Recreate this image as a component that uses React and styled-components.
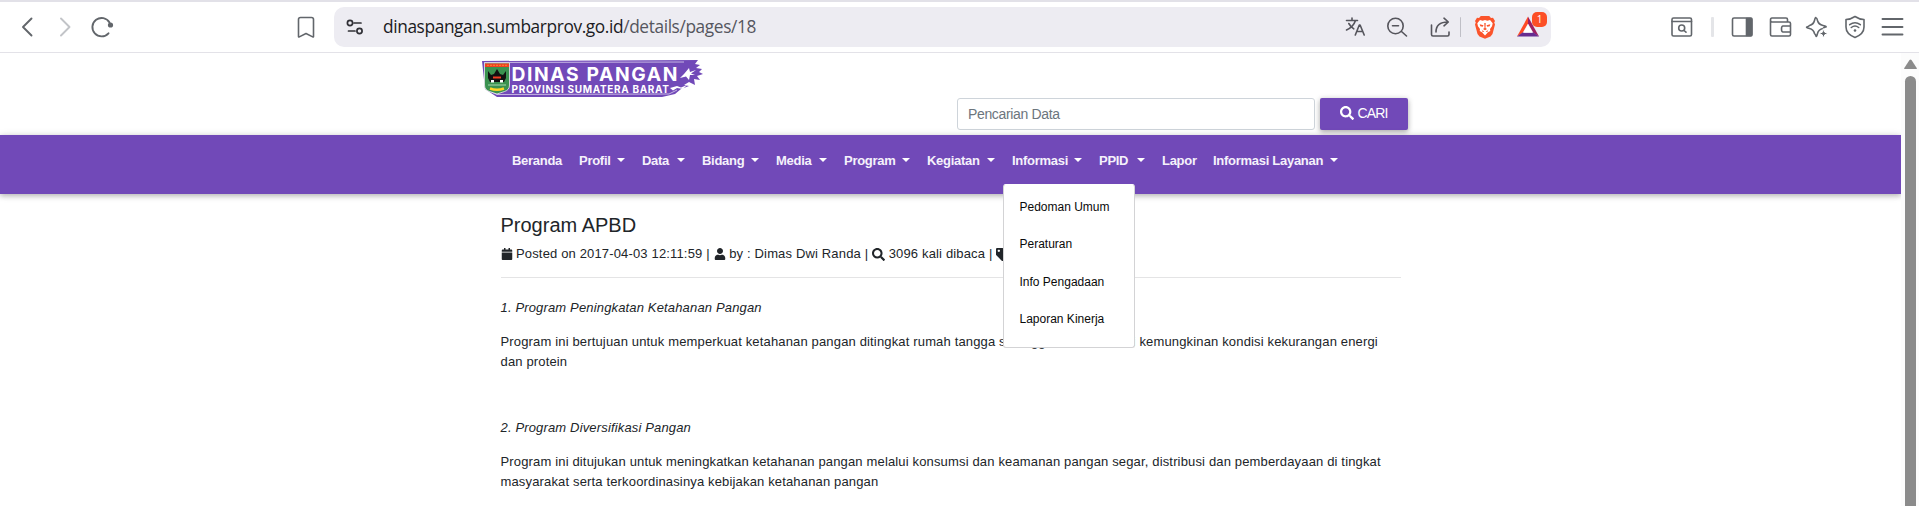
import React from "react";
import styled, { createGlobalStyle } from "styled-components";
import { FaSearch, FaCalendar, FaUser, FaTag } from "react-icons/fa";

const Global = createGlobalStyle`
  * { box-sizing: border-box; }
  html, body { margin: 0; background: #fff; overflow: hidden; }
  body { font-family: "Liberation Sans", Arial, sans-serif; color: #212529; }
`;

const Window = styled.div`
  display: flex;
  flex-direction: column;
  width: 1919px;
  height: 506px;
  overflow: hidden;
`;

const Toolbar = styled.header`
  display: flex;
  align-items: center;
  flex: none;
  height: 53px;
  padding: 0 11px 0 15px;
  border-top: 2px solid #e2e1e8;
  border-bottom: 1px solid #e3e2e8;
`;

const ToolIcon = styled.svg`
  flex: none;
  width: 24px;
  height: 24px;
  margin-left: ${(p) => p.$gap || 0}px;
  fill: none;
  stroke: ${(p) => p.$color || "#62666b"};
  stroke-width: ${(p) => p.$weight || 1.6};
  stroke-linecap: round;
  stroke-linejoin: round;
`;

const AddressBar = styled.div`
  display: flex;
  align-items: center;
  width: 1217px;
  height: 40px;
  margin-left: 16px;
  padding-left: 9px;
  border-radius: 10px;
  background: #edecf2;
`;

const Url = styled.div`
  flex: none;
  width: 966px;
  padding-left: 16px;
  font: 17.3px/24px "Open Sans", "Noto Sans", sans-serif;
  letter-spacing: -0.38px;
  color: #55565e;
  white-space: nowrap;
  b { font-weight: 400; color: #1b1b22; }
`;

const Divider = styled.span`
  width: ${(p) => p.$w}px;
  height: 20px;
  margin-left: ${(p) => p.$gap}px;
  border-radius: 1px;
  background: ${(p) => p.$color};
`;

const Rewards = styled.div`
  position: relative;
  display: flex;
  margin-left: 18px;
`;

const Badge = styled.span`
  position: absolute;
  left: 17px;
  top: -3px;
  width: 15px;
  height: 15px;
  border-radius: 5px;
  background: #fc4f26;
  color: #fff;
  font: 10px/15px "Open Sans", sans-serif;
  text-align: center;
`;

const Viewport = styled.div`
  display: flex;
  flex: 1;
  min-height: 0;
`;

const Page = styled.div`
  width: 1901px;
  overflow: hidden;
`;

const ScrollRail = styled.div`
  display: flex;
  flex-direction: column;
  align-items: center;
  width: 18px;
  padding: 6px 0 0 1px;
  background: #fcfcfc;
`;

const ScrollThumb = styled.div`
  flex: 1;
  width: 11px;
  margin-top: 6px;
  border-radius: 6px 6px 0 0;
  background: #8b8b8b;
`;

const Masthead = styled.div`
  display: flex;
  height: 82px;
  padding: 7px 0 0 482px;
`;

const Search = styled.form`
  display: flex;
  margin: 38px 0 0 253px;
`;

const SearchField = styled.input`
  width: 358px;
  height: 32px;
  padding: 0 10px;
  border: 1px solid #ced4da;
  border-radius: 3px;
  font: 14px "Liberation Sans", Arial, sans-serif;
  letter-spacing: -0.35px;
  &::placeholder { color: #6c757d; opacity: 1; }
`;

const SearchButton = styled.button`
  display: flex;
  align-items: center;
  justify-content: center;
  gap: 3px;
  width: 88px;
  height: 32px;
  margin-left: 5px;
  padding: 0 0 3px;
  border: 0;
  border-radius: 2px;
  background: #7149b8;
  box-shadow: 0 2px 5px rgba(0, 0, 0, 0.25), 0 1px 7px rgba(0, 0, 0, 0.12);
  color: #fff;
  font: 14px "Liberation Sans", Arial, sans-serif;
  letter-spacing: -0.8px;
`;

const NavBar = styled.nav`
  position: relative;
  display: flex;
  height: 59px;
  padding: 16px 0 0 512px;
  background: #7149b8;
  box-shadow: 0 2px 5px rgba(0, 0, 0, 0.2), 0 1px 8px rgba(0, 0, 0, 0.14);
`;

const NavItem = styled.div`
  position: relative;
  display: flex;
  flex: none;
  width: ${(p) => p.$w}px;
  font-size: 13px;
  font-weight: 700;
  line-height: 20px;
  letter-spacing: -0.28px;
  color: #f5f1fb;
  white-space: nowrap;
`;

const Caret = styled.span`
  margin: 7px 17px 0 auto;
  width: 8px;
  height: 4px;
  border: 4px solid transparent;
  border-top-color: #fff;
  border-bottom: 0;
`;

const Menu = styled.div`
  position: absolute;
  left: -9px;
  top: 33px;
  z-index: 2;
  width: 132px;
  height: 164px;
  padding: 4px 0 0 15.5px;
  border: 1px solid #d3d3d5;
  border-top-color: #fff;
  border-radius: 3px;
  background: #fff;
`;

const MenuLink = styled.div`
  height: 37.3px;
  font-size: 12px;
  font-weight: 400;
  line-height: 37.3px;
  letter-spacing: 0;
  color: #0a0a0a;
`;

const Article = styled.main`
  width: 900px;
  margin-left: 500.5px;
  padding-top: 19px;
  font-size: 13px;
  line-height: 20px;
  letter-spacing: 0.155px;
  white-space: nowrap;
`;

const Title = styled.h1`
  margin: 0;
  font-size: 20px;
  font-weight: 400;
  line-height: 24px;
  letter-spacing: 0;
`;

const Meta = styled.div`
  display: flex;
  align-items: center;
  height: 41px;
  margin-bottom: 20px;
  padding: 5px 0 11px;
  border-bottom: 1px solid #e4e4e5;
  span { margin: 0 4px 0 3.5px; }
`;

const Program = styled.section`
  height: 120px;
  p { margin: 0 0 14px; }
  em { display: block; margin-bottom: 14px; }
`;

const nav = [
  ["Beranda", 67, false],
  ["Profil", 63, true],
  ["Data", 60, true],
  ["Bidang", 74, true],
  ["Media", 68, true],
  ["Program", 83, true],
  ["Kegiatan", 85, true],
  ["Informasi", 87, true],
  ["PPID", 63, true],
  ["Lapor", 51, false],
  ["Informasi Layanan", 142, true],
];

const menu = ["Pedoman Umum", "Peraturan", "Info Pengadaan", "Laporan Kinerja"];

function BrowserToolbar() {
  return (
    <Toolbar>
      <ToolIcon viewBox="0 0 24 24" $weight={1.9}><path d="M16.500 3.500 8 12l8.500 8.500" /></ToolIcon>
      <ToolIcon viewBox="0 0 24 24" $gap={14} $color="#c2c4c8" $weight={1.9}><path d="M8 3.500 16.500 12 8 20.500" /></ToolIcon>
      <ToolIcon viewBox="0 0 24 24" $gap={13} $weight={1.9}>
        <path d="M18.500 18.300A9.200 9.200 0 1 1 19.500 7.500" />
        <circle cx="20.500" cy="10" r="2.600" fill="#62666b" stroke="none" />
      </ToolIcon>
      <ToolIcon viewBox="0 0 24 24" $gap={180}>
        <path d="M6.500 2.500h11q2 0 2 2v17q0 .8-.8.4L12 18.500l-6.700 3.400q-.8.4-.8-.4v-17q0-2 2-2Z" />
      </ToolIcon>
      <AddressBar>
        <ToolIcon viewBox="0 0 24 24" $color="#303036" $weight={1.7}>
          <circle cx="7" cy="8" r="2.600" /><path d="M11 8h7M5.500 16h6.500" /><circle cx="16.500" cy="16" r="2.600" />
        </ToolIcon>
        <Url><b>dinaspangan.sumbarprov.go.id</b>/details/pages/18</Url>
        <ToolIcon viewBox="0 0 24 24" $gap={10} $color="#55555c">
          <path d="M3.500 5.500h11M9 3v2.500M12.500 5.500C11 10 8 13 3.500 15M5.800 8.500c1.500 2.700 3 4 5 5.300M12.300 20l4-10h.8l4.100 10M13.800 16.500h5.800" />
        </ToolIcon>
        <ToolIcon viewBox="0 0 24 24" $gap={18} $color="#55555c">
          <circle cx="10.500" cy="11" r="7.700" /><path d="m16.500 16.500 5 4.500M7.500 10.700h6" />
        </ToolIcon>
        <ToolIcon viewBox="0 0 24 24" $gap={19} $color="#55555c">
          <path d="M3.500 10v9.500q0 1.500 1.500 1.500h14.500q1.500 0 1.500-1.500V17M8 17c0-6 4-10 12-10M16 3.200 20.300 7 16 10.800" />
        </ToolIcon>
        <Divider $w={1} $gap={8} $color="#bfbfc6" />
        <ToolIcon viewBox="0 0 24 24" $gap={12} $color="none">
          <path fill="#fb542b" d="M7.800 1h8.400l1.800 2 2-.2 2 3.200-.8 1.500.8 2-2.500 9.500-2 2.500L12 23.800l-5.500-2.300-2-2.500L2 9.500l.8-2L2 6l2-3.200 2 .2Z" />
          <path fill="#fff" d="m7 5 2.700.7L12 5l2.300.7L17 5l2.700 3.300-.7 3-2 2.700.3 2-2.300 1.300L12 20.500l-3-3.200L6.700 16l.3-2-2-2.700-.7-3Z" />
          <path fill="#fb542b" d="m6.700 9.300 3.800 1-.8 1.500-2.400-.6ZM17.300 9.300l-3.800 1 .8 1.500 2.400-.6ZM11.300 8h1.400l-.2 5 1.500 1-2 1.300-2-1.300 1.500-1ZM8.500 14l.8 1.400 2 .8-1.600 1ZM15.500 14l-.8 1.400-2 .8 1.600 1Z" />
        </ToolIcon>
        <Rewards>
          <ToolIcon viewBox="0 0 24 24" $gap={1} $color="none">
            <path fill="#ff4a25" d="M12 1.500v7L6.500 18 1 21.500Z" />
            <path fill="#9e1f63" d="M12 1.500 23 21.500 17.500 18 12 8.500Z" />
            <path fill="#662d91" d="M1 21.500 6.500 17.500h11l5.500 4Z" />
            <path fill="#fff" d="m12 9.500 4.700 8.300H7.300Z" />
          </ToolIcon>
          <Badge>1</Badge>
        </Rewards>
      </AddressBar>
      <ToolIcon viewBox="0 0 24 24" $gap={119}>
        <rect x="2" y="3" width="19.500" height="18" rx="1.500" /><path d="M2 6.500h19.500" /><circle cx="11.700" cy="13" r="3" /><path d="m14 15.500 2 1.700" />
      </ToolIcon>
      <Divider $w={3} $gap={17} $color="#e4e5e8" />
      <ToolIcon viewBox="0 0 24 24" $gap={16}>
        <rect x="2.500" y="3" width="19.500" height="18" rx="1.500" /><path d="M16.500 3.500h5v17h-5Z" fill="#62666b" />
      </ToolIcon>
      <ToolIcon viewBox="0 0 24 24" $gap={14}>
        <path d="M2.500 5.500v14q0 1.500 1.500 1.500h17q1.500 0 1.500-1.500v-11Q22.500 7 21 7H4Q2.500 7 2.500 5t1.500-2h14q1.500 0 1.500 1.500V7M22.500 11H15q-1.500 0-1.500 3t1.500 3h7.500" />
      </ToolIcon>
      <ToolIcon viewBox="0 0 24 24" $gap={13}>
        <path d="M11 3q1 0 1.500 2.500 1 4 5.500 5t2.500 1.500-2.500 1.500q-4.500 1-5.500 5T11 21t-1.500-2.500q-1-4-5-5T2 12t2.500-1.500q4-1 5-5T11 3Z" />
        <path stroke="#fff" fill="#62666b" strokeWidth="1" d="m18.500 14 1.300 3.200L23 18.500l-3.200 1.300-1.300 3.200-1.300-3.200-3.200-1.300 3.200-1.300Z" />
      </ToolIcon>
      <ToolIcon viewBox="0 0 24 24" $gap={14}>
        <path d="M12 1.500q4.500 3 9 3V12q0 7-9 10.500Q3 19 3 12V4.500q4.500 0 9-3Z" />
        <path d="M6.700 9.700q5.300-4 10.600 0M8.300 12.500q3.700-3 7.400 0" /><circle cx="12" cy="15.500" r="1.300" fill="#62666b" stroke="none" />
      </ToolIcon>
      <ToolIcon viewBox="0 0 24 24" $gap={13} $weight={1.900}><path d="M2.500 4h20M2.500 12h20M2.500 19.500h20" /></ToolIcon>
    </Toolbar>
  );
}

function Logo() {
  return (
    <svg width="222" height="38" viewBox="0 0 222 38">
      <path fill="#7149b8" d="M0 1 216 0l-3 4 5 1-4 3 6 1-3 3 4 2-6 2 3 4-6-1 1 6-6-3-5 3 5 1-8 3-6 5-13 3H15L3 29Z" />
      <path fill="none" stroke="#fff" strokeWidth=".6" d="M2 2.500 202 2M3 29l12 5.500 172-.5 8-4" />
      <path fill="#fff" d="m202 14 5-6 1 4 6-2-5 3.500 4 1.500-5 0-1 5-3-3.500-6 1.500ZM188 28l7-2 4 1.500 6-2.500-4 4-6-1-4 2.500Z" />
      <path fill="#3b9250" stroke="#eee" strokeWidth=".8" d="M2.500 3h25v22q0 5-5 6.500L15 34l-7.500-2.500q-5-1.500-5-6.500Z" />
      <path fill="#ef3e23" d="M3 3.500h24V7H3Z" />
      <path stroke="#ffa02d" strokeWidth=".8" strokeDasharray="2 1" d="M5 5.300h20" />
      <path fill="#111" d="m6 11 3 4 3-1 3-5 3 5 3 1 3-4v7l-2 4H8l-2-4Z" />
      <path fill="#ef3e23" d="M11 16.500h8v2h-8Z" />
      <path fill="#fff" d="M9 20h3v2.500H9zM18 20h3v2.500h-3z" />
      <path stroke="#a7d8ad" d="M6 25h18" />
      <path fill="none" stroke="#ffd426" strokeWidth="2.500" d="M8 28.500q7 2.500 14 0" />
      <g fill="#fff" fontFamily="Inter, sans-serif">
        <text x="29.500" y="20.800" fontSize="19.300" fontWeight="700" textLength="166">DINAS PANGAN</text>
        <text x="29.500" y="32.600" fontSize="10" fontWeight="700" textLength="157.500">PROVINSI SUMATERA BARAT</text>
      </g>
    </svg>
  );
}

export default function App() {
  return (
    <Window>
      <Global />
      <BrowserToolbar />
      <Viewport>
        <Page>
          <Masthead>
            <Logo />
            <Search>
              <SearchField placeholder="Pencarian Data" />
              <SearchButton type="button"><FaSearch size={14} />CARI</SearchButton>
            </Search>
          </Masthead>
          <NavBar>
            {nav.map(([label, w, caret]) => (
              <NavItem key={label} $w={w}>
                {label}
                {caret && <Caret />}
                {label === "Informasi" && (
                  <Menu>{menu.map((m) => <MenuLink key={m}>{m}</MenuLink>)}</Menu>
                )}
              </NavItem>
            ))}
          </NavBar>
          <Article>
            <Title>Program APBD</Title>
            <Meta>
              <FaCalendar size={12} /><span>Posted on 2017-04-03 12:11:59 |</span>
              <FaUser size={12} /><span>by : Dimas Dwi Randa |</span>
              <FaSearch size={13} /><span>3096 kali dibaca |</span>
              <FaTag size={13} />
            </Meta>
            <Program>
              <em>1. Program Peningkatan Ketahanan Pangan</em>
              <p>
                Program ini bertujuan untuk memperkuat ketahanan pangan ditingkat rumah tangga sehingga terhindar dari kemungkinan kondisi kekurangan energi<br />
                dan protein
              </p>
            </Program>
            <Program>
              <em>2. Program Diversifikasi Pangan</em>
              <p>
                Program ini ditujukan untuk meningkatkan ketahanan pangan melalui konsumsi dan keamanan pangan segar, distribusi dan pemberdayaan di tingkat<br />
                masyarakat serta terkoordinasinya kebijakan ketahanan pangan
              </p>
            </Program>
          </Article>
        </Page>
        <ScrollRail>
          <svg width="13" height="11" viewBox="0 0 13 11"><path fill="#8b8b8b" d="M5.500 1q1-1 2 0L12.700 9q.5 1-.7 1H1Q-.2 10 .3 9Z" /></svg>
          <ScrollThumb />
        </ScrollRail>
      </Viewport>
    </Window>
  );
}
